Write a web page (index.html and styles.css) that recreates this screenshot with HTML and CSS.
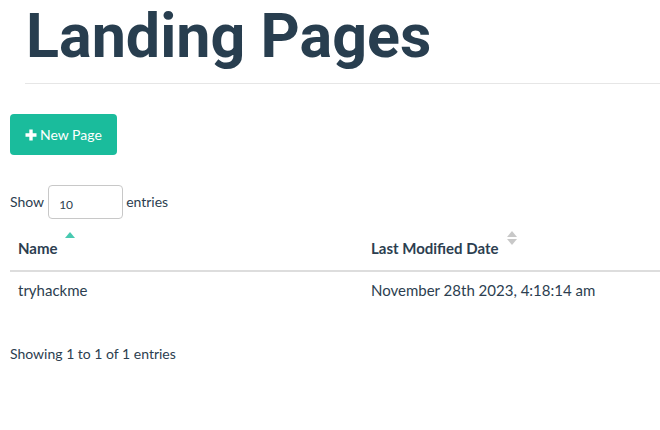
FILE: index.html
```html
<!DOCTYPE html>
<html>
<head>
<meta charset="utf-8">
<link rel="stylesheet" href="styles.css">
</head>
<body>
<div class="page">
  <div class="header">
    <h1 class="title">Landing Pages</h1>
  </div>
  <div class="actions">
    <button class="btn-new"><svg class="plus" viewBox="0 0 12 12" width="12" height="12"><path d="M4.3 0.5h3.4v3.8h3.8v3.4H7.7v3.8H4.3V7.7H0.5V4.3h3.8z" fill="#fff"/></svg>New Page</button>
  </div>
  <div class="length">
    <span>Show</span>
    <div class="select">10</div>
    <span>entries</span>
  </div>
  <table class="grid">
    <thead>
      <tr>
        <th class="col-name"><span class="th-label">Name<span class="sort-up"></span></span></th>
        <th class="col-date"><span class="th-label">Last Modified Date<span class="sort-both"><span class="tri-up"></span><span class="tri-down"></span></span></span></th>
      </tr>
    </thead>
    <tbody>
      <tr>
        <td>tryhackme</td>
        <td>November 28th 2023, 4:18:14 am</td>
      </tr>
    </tbody>
  </table>
  <div class="info">Showing 1 to 1 of 1 entries</div>
</div>
</body>
</html>
```
FILE: styles.css
```css
html, body {
  margin: 0;
  padding: 0;
  background: #fff;
}
body {
  font-family: "Lato", "Open Sans", sans-serif;
  font-size: 14px;
  line-height: 20px;
  color: #2c3e50;
}
.page {
  padding: 0 0 0 10px;
}
.header {
  margin-left: 15px;
  border-bottom: 1px solid #e6e6e6;
  padding-bottom: 11px;
}
.title {
  margin: 0;
  font-family: "Roboto", sans-serif;
  font-weight: 700;
  font-size: 61px;
  line-height: 72px;
  color: #283e4f;
  padding-left: 1px;
}
.actions {
  margin-top: 30px;
}
.btn-new {
  display: inline-flex;
  align-items: center;
  gap: 3px;
  height: 41px;
  padding: 0 15px;
  background: #1abc9c;
  border: none;
  border-radius: 4px;
  color: #fff;
  font-family: inherit;
  font-size: 14px;
}
.plus {
  display: block;
}
.length {
  display: flex;
  align-items: center;
  gap: 3px;
  margin-top: 30px;
}
.select {
  margin-left: 1px;
  width: 63px;
  height: 29px;
  border: 1px solid #c8c8c8;
  border-radius: 4px;
  font-size: 12px;
  display: flex;
  align-items: flex-end;
  padding-left: 10px;
  padding-bottom: 3px;
}
.grid {
  margin-top: 11px;
  width: 650px;
  border-collapse: collapse;
  font-size: 15px;
}
.grid th {
  text-align: left;
  font-weight: 700;
  padding: 8px 8px 12px 8px;
  border-bottom: 2px solid #dddddd;
}
.col-name {
  width: 337px;
}
.grid td {
  padding: 8px 8px 10px;
}
.th-label {
  position: relative;
  display: inline-block;
}
.sort-up {
  position: absolute;
  left: calc(100% + 7px);
  top: -6px;
  width: 0;
  height: 0;
  border-left: 5px solid transparent;
  border-right: 5px solid transparent;
  border-bottom: 6px solid #1abc9c;
  opacity: 0.8;
}
.sort-both {
  position: absolute;
  left: calc(100% + 8px);
  top: -7px;
  display: flex;
  flex-direction: column;
  gap: 2px;
}
.tri-up {
  width: 0;
  height: 0;
  border-left: 5px solid transparent;
  border-right: 5px solid transparent;
  border-bottom: 6px solid #c8c8c8;
}
.tri-down {
  width: 0;
  height: 0;
  border-left: 5px solid transparent;
  border-right: 5px solid transparent;
  border-top: 6px solid #c8c8c8;
}
.info {
  margin-top: 34px;
}
```
